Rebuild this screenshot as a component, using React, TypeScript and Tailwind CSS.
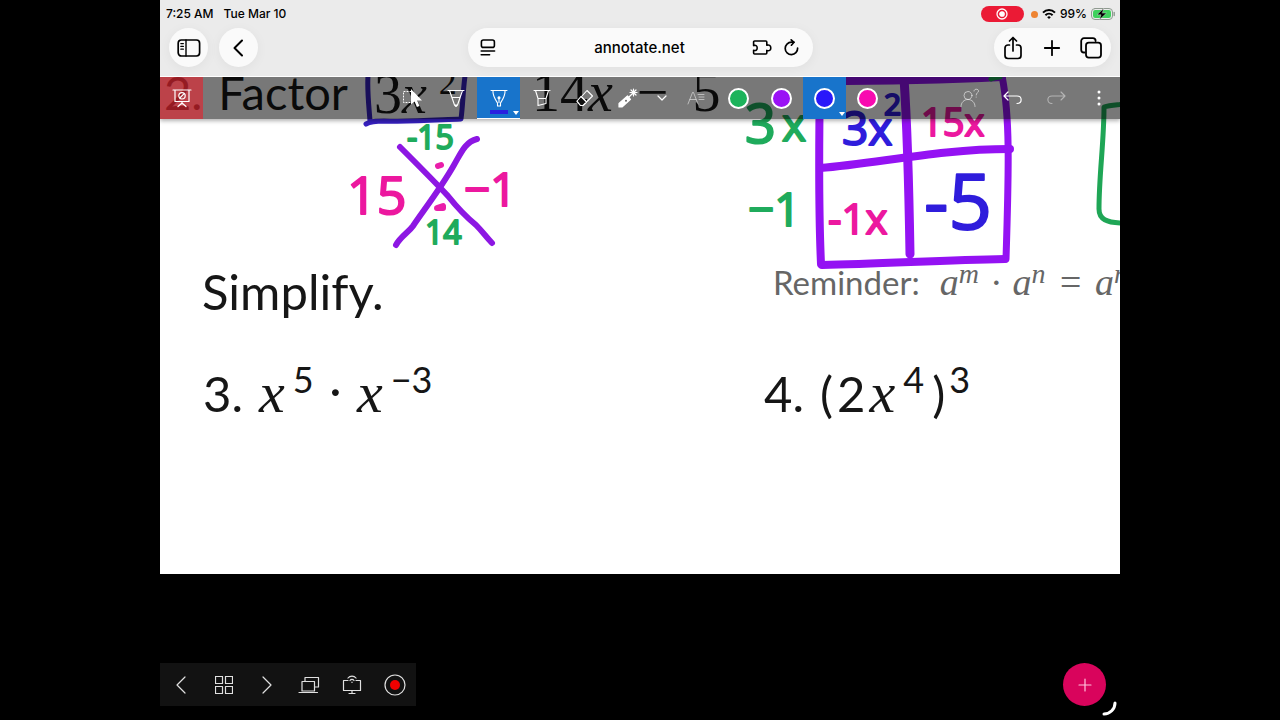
import type { ReactNode } from "react";

type IconProps = { w: number; h: number; children: ReactNode; className?: string; sw?: number };

function Icon({ w, h, children, className = "", sw = 1 }: IconProps) {
  return (
    <svg
      width={w}
      height={h}
      viewBox={`0 0 ${w} ${h}`}
      fill="none"
      stroke="currentColor"
      strokeWidth={sw}
      strokeLinecap="round"
      strokeLinejoin="round"
      aria-hidden="true"
      className={`shrink-0 ${className}`}
    >
      {children}
    </svg>
  );
}

function StatusBar() {
  return (
    <div className="flex h-7 items-center justify-between pr-1 pl-[6px] text-[12px] font-medium text-black">
      <div className="flex gap-[10px]">
        <span>7:25 AM</span>
        <span>Tue Mar 10</span>
      </div>
      <div className="flex items-center">
        <span className="mr-[7px] flex h-4 w-[43px] items-center justify-center rounded-full bg-[#eb1a35] text-white">
          <Icon w={12} h={12} sw={1.3}>
            <circle cx="6" cy="6" r="5" />
            <circle cx="6" cy="6" r="2.2" fill="currentColor" />
          </Icon>
        </span>
        <span className="mr-1 size-[7px] rounded-full bg-[#ee8433]" />
        <Icon w={14} h={12} sw={2} className="mr-1">
          <path d="M1 4.600a8.500 8.500 0 0 1 12 0M3.400 7.200a5.100 5.100 0 0 1 7.200 0" strokeLinecap="butt" />
          <path d="M7 11 5.200 9.200a2.500 2.500 0 0 1 3.600 0z" fill="currentColor" stroke="none" />
        </Icon>
        <span className="mr-1">99%</span>
        <Icon w={25} h={12}>
          <rect x="0.5" y="0.5" width="21" height="11" rx="3.5" stroke="#8f9a90" />
          <rect x="2" y="2" width="18" height="8" rx="2.2" fill="#3fd15d" stroke="none" />
          <path d="M23.200 4.500v3" stroke="#8f9a90" strokeWidth="1.4" />
          <path d="M12.500 0.600 6 6.800h4L8.600 11.500 15.500 5.100h-4z" fill="#000" stroke="#ebebeb" strokeWidth="0.4" />
        </Icon>
      </div>
    </div>
  );
}

function BrowserBar() {
  return (
    <nav aria-label="Browser" className="grid grid-cols-[1fr_345px_1fr] items-center px-[9px] text-black">
      <div className="flex gap-[11px]">
        <button aria-label="Sidebar" className="flex size-[39px] items-center justify-center rounded-full bg-[#fafafa] shadow-[0_2px_12px_rgba(0,0,0,0.05)]">
          <Icon w={24} h={18} sw={1.7}>
            <rect x="1.2" y="1" width="21.4" height="16" rx="3.2" />
            <path d="M9 1v16" strokeWidth="1.4" />
            <path d="M3.8 4.6h2.6M3.8 7.4h2.6M3.8 10.2h2.6" strokeWidth="1.2" />
          </Icon>
        </button>
        <button aria-label="Back" className="flex size-[39px] items-center justify-center rounded-full bg-[#fafafa] shadow-[0_2px_12px_rgba(0,0,0,0.05)]">
          <Icon w={16} h={18} sw={2}>
            <path d="M11 1.5 3.5 9l7.5 7.5" />
          </Icon>
        </button>
      </div>
      <div className="flex h-[39px] items-center rounded-full bg-[#fafafa] pr-[14px] pl-3 shadow-[0_2px_12px_rgba(0,0,0,0.05)]">
        <button aria-label="Page menu">
          <Icon w={16} h={17} sw={1.6}>
            <rect x="1.4" y="1" width="13" height="7.4" rx="2" />
            <path d="M1.2 12h13.4M1.2 15.8h8.4" />
          </Icon>
        </button>
        <button className="flex-1 pl-8 text-center text-[15px] leading-6 font-medium">annotate.net</button>
        <div className="flex items-center gap-3">
          <button aria-label="Extensions">
            <Icon w={20} h={16} sw={1.6}>
              <path d="M2.6 1h11.2a1 1 0 0 1 1 1v3.3c2.2-1 4 .2 4 2.6s-1.800 3.500-4 2.500V13a1 1 0 0 1-1 1H2.600a1 1 0 0 1-1-1v-2.800c2 .8 3.600 0 3.600-2.300S3.600 4.900 1.600 5.600V2a1 1 0 0 1 1-1z" />
            </Icon>
          </button>
          <button aria-label="Reload">
            <Icon w={15} h={17} sw={1.7}>
              <path d="M13.600 9.200a6.200 6.200 0 1 1-6.200-6.000h2.400" />
              <path d="M7.200 0.900 10 3.300 7.400 6.200" />
            </Icon>
          </button>
        </div>
      </div>
      <div className="flex h-[39px] w-[117px] items-center justify-between justify-self-end rounded-full bg-[#fafafa] px-[9px] shadow-[0_2px_12px_rgba(0,0,0,0.05)]">
        <button aria-label="Share">
          <Icon w={20} h={24} sw={1.7}>
            <path d="M6.500 9H5a3 3 0 0 0-3 3v7.500a3 3 0 0 0 3 3h10a3 3 0 0 0 3-3V12a3 3 0 0 0-3-3h-1.500" />
            <path d="M10 15V1.500M6.500 5 10 1.500 13.500 5" />
          </Icon>
        </button>
        <button aria-label="New tab">
          <Icon w={18} h={18} sw={1.800}>
            <path d="M9 1.800v14.400M1.800 9h14.400" />
          </Icon>
        </button>
        <button aria-label="Tabs">
          <Icon w={22} h={22} sw={1.800}>
            <path d="M4.500 15.500H4A2.800 2.800 0 0 1 1.200 12.700V4A2.800 2.800 0 0 1 4 1.200h8.800A2.800 2.800 0 0 1 15.600 4" />
            <rect x="6" y="5.600" width="15" height="15" rx="2.800" />
          </Icon>
        </button>
      </div>
    </nav>
  );
}

const slot = "relative flex h-[42px] w-[43px] shrink-0 items-center justify-center";

function Swatch({ name, color, active = false }: { name: string; color: string; active?: boolean }) {
  return (
    <button aria-label={name} className={`${slot} ${active ? "bg-[#1874cb]" : ""}`}>
      <span className={`size-[21px] rounded-full border-2 border-white ${color}`} />
      {active && <Corner />}
    </button>
  );
}

function Corner() {
  return (
    <svg width="6" height="4" viewBox="0 0 6 4" className="absolute right-[1px] bottom-[3px]" aria-hidden="true">
      <path d="M0 0h6L3 4z" fill="#fff" />
    </svg>
  );
}

function Toolbar() {
  return (
    <div
      role="toolbar"
      aria-label="Annotation tools"
      className="absolute inset-x-0 top-0 z-10 grid grid-cols-[1fr_auto_1fr] bg-black/53 text-white shadow-[0_2px_4px_rgba(0,0,0,0.3)]"
    >
      <div>
        <button aria-label="Stop presenting" className={`${slot} bg-[#e0252f]/65`}>
          <Icon w={20} h={20} sw={1.200}>
            <path d="M1 2h18M3 2v11.500h14V2M10 13.500v2.500M6 18.500 10 15l4 3.500" />
            <circle cx="10" cy="7.800" r="3.200" />
            <path d="m7.800 10 4.400-4.400" />
          </Icon>
        </button>
      </div>
      <div className="flex">
        <button aria-label="Select" className={slot}>
          <Icon w={22} h={20}>
            <path d="M9 3.500H1.500v11H8" strokeDasharray="1 2" />
            <path d="M9 1v15.500l3.600-3 2.300 5.500 2.600-1.100-2.300-5.400H20z" fill="currentColor" stroke="none" />
          </Icon>
        </button>
        <button aria-label="Pencil" className={slot}>
          <Icon w={18} h={20} sw={1.100}>
            <path d="M1 2.500h16M2.500 2.500 7.500 17h3l5-14.500M5 9.500h8M7.500 17l1.500 1.500 1.500-1.500" />
          </Icon>
        </button>
        <button aria-label="Pen" className={`${slot} border-b border-white bg-[#1874cb]`}>
          <Icon w={18} h={20} sw={1.100}>
            <path d="M1 2.500h16M3 2.500c-.500 5 2 8.500 4.500 12.500v3h3v-3C13 11 15.500 7.500 15 2.500M9 10v4.500" />
            <circle cx="9" cy="9.800" r="1" fill="currentColor" />
          </Icon>
          <span className="absolute bottom-[4px] h-1 w-[18px] bg-[#2a20e0]" />
          <Corner />
        </button>
        <button aria-label="Highlighter" className={slot}>
          <Icon w={18} h={20} sw={1.100}>
            <path d="M1 2.500h16M2.500 2.500 5 10.500h8l2.500-8M5 10.500v7l8-2v-5" />
          </Icon>
        </button>
        <button aria-label="Eraser" className={slot}>
          <Icon w={18} h={18} sw={1.100}>
            <path d="M11 1.500 16.500 7 7 16.500H4.500L1 12.500zM5 7.500 10.500 13" />
            <path d="m1 12 4-4.500 5.500 5.500L7 16.500H4.500z" fill="#111" />
          </Icon>
        </button>
        <button aria-label="Laser pointer" className={slot}>
          <Icon w={20} h={20} sw={1.200}>
            <path d="M1 15.500 9.500 8l3 3.300L4 19H1z" fill="currentColor" />
            <path d="m11 9 4-4M15.500 1v7M12 4.500h7M13 2l5 5M18 2l-5 5" />
            <circle cx="8" cy="12.800" r="1" fill="#666" stroke="none" />
          </Icon>
        </button>
        <button aria-label="More tools" className="flex h-[42px] w-[25px] items-center justify-center">
          <Icon w={10} h={6} sw={1.200}>
            <path d="m1 1 4 4 4-4" />
          </Icon>
        </button>
        <button aria-label="Text" className={`${slot} text-white/50`}>
          <Icon w={18} h={14}>
            <path d="M1 13 5.500 1.500h1L11 13M3 8.500h6M11 3.500h6M12 6h5M12 8.500h5" />
          </Icon>
        </button>
        <Swatch name="Green" color="bg-[#1cb35b]" />
        <Swatch name="Purple" color="bg-[#9a12f5]" />
        <Swatch name="Blue" color="bg-[#2a18fa]" active />
        <Swatch name="Pink" color="bg-[#f80ab0]" />
      </div>
      <div className="flex justify-end">
        <button aria-label="Participants" className={`${slot} text-white/55`}>
          <Icon w={20} h={20}>
            <circle cx="8" cy="7.500" r="4" />
            <path d="M1 18.500c0-4 3-7 7-7s7 3 7 7M14 3c0-2.500 4.500-2.500 4.500 0 0 2-2.300 1.500-2.300 4M16.200 9v.200" />
          </Icon>
        </button>
        <button aria-label="Undo" className={slot}>
          <Icon w={20} h={14} sw={1.200}>
            <path d="M5 1 1 5l4 4M1 5h13c5.500 0 5.500 7.500 0 7.500" />
          </Icon>
        </button>
        <button aria-label="Redo" className={`${slot} text-white/45`}>
          <Icon w={20} h={14} sw={1.100}>
            <path d="m15 1 4 4-4 4M19 5H6C0.500 5 0.500 12.500 6 12.500" />
          </Icon>
        </button>
        <button aria-label="More options" className={slot}>
          <Icon w={4} h={18}>
            <g fill="currentColor" stroke="none">
              <circle cx="2" cy="3" r="1.500" />
              <circle cx="2" cy="9" r="1.500" />
              <circle cx="2" cy="15" r="1.500" />
            </g>
          </Icon>
        </button>
      </div>
    </div>
  );
}

const sans = "font-['Lato','Carlito',sans-serif]";
const serif = "font-['Liberation_Serif',serif]";
const power = "top-0 align-[19px] text-[36px] leading-none";
const smallPower = "top-0 align-[12px] text-[28px] leading-none";

function Worksheet() {
  return (
    <div className="leading-none whitespace-nowrap text-[#161616]">
      <p className={`absolute -top-2 left-1 flex items-baseline ${sans} text-[47px]`}>
        <span>2.</span>
        <span className="ml-4">Factor</span>
      </p>
      <p className={`absolute top-[-13px] left-[214px] ${serif} text-[56px]`}>
        3<i>x</i>
        <sup className={`ml-3 ${power}`}>2</sup>
      </p>
      <p className={`absolute top-[-13px] left-[372px] ${serif} text-[56px]`}>
        14<i>x</i>
        <span className="mx-6">−</span>5
      </p>
      <h2 className={`absolute top-[190px] left-[42px] ${sans} text-[49px]`}>Simplify.</h2>
      <p className={`absolute top-[284px] left-[43px] ${sans} text-[49px]`}>
        3.
        <span className={`ml-4 ${serif} text-[58px] leading-none`}>
          <i>x</i>
          <sup className={`ml-2 ${sans} ${power}`}>5</sup>
          <span className="mx-3">·</span>
          <i>x</i>
          <sup className={`ml-2 ${sans} ${power}`}>−3</sup>
        </span>
      </p>
      <p className={`absolute top-[284px] left-[604px] ${sans} text-[49px]`}>
        4.
        <span className="ml-4">
          (<span className="ml-1">2</span>
          <i className={`ml-1 ${serif} text-[58px] leading-none`}>x</i>
          <sup className={`ml-2 ${power}`}>4</sup>
          <span className="ml-2">)</span>
          <sup className={`ml-1 ${power}`}>3</sup>
        </span>
      </p>
      <p className={`absolute top-[183px] left-[613px] ${sans} text-[33px] text-[#666]`}>
        Reminder:
        <span className={`ml-5 ${serif} text-[38px] leading-none italic`}>
          a<sup className={smallPower}>m</sup>
          <span className="mx-3">·</span>a<sup className={smallPower}>n</sup>
          <span className="mx-3">=</span>a<sup className={smallPower}>n</sup>
        </span>
      </p>
    </div>
  );
}

function Ink() {
  return (
    <svg width="960" height="497" viewBox="160 77 960 497" className="absolute top-0 left-0 max-w-none" role="img" aria-label="Handwritten work">
      <g fill="none" strokeLinecap="round" strokeLinejoin="round">
        <path d="M368 76c-1 15 1 31 2 45M366 124c5-3 10-3 18-3 28 1 52-1 77-2 2-15 2-29 4-43" stroke="#3620c0" strokeWidth="5" />
        <g stroke="#8d17e3" strokeWidth="6">
          <path d="M400 147c18 18 34 34 48 49 8 10 17 20 28 29 7 7 10 12 16 18" />
          <path d="M477 139c-12 3-16 14-23 26-13 23-31 46-41 61-5 7-12 10-17 19" />
        </g>
        <g stroke="#9412f3">
          <path d="M820 78c-1 60-2 120 1 186" strokeWidth="8" />
          <path d="M821 81c60 0 120-1 181-4" strokeWidth="8" />
          <path d="M904 78c4 60 5 115 6 176" strokeWidth="9" />
          <path d="M1002 76c8 40 7 90 4 183" strokeWidth="7" />
          <path d="M820 168c60-5 120-19 190-19" strokeWidth="8" />
          <path d="M822 265c60-1 120-5 183-6" strokeWidth="8" />
        </g>
        <path d="M991 79c4-2 7-2 9-2M1124 104c-8 1-14 1-20 3 0 35-5 68-5 102 0 10 7 14 25 14" stroke="#1fa656" strokeWidth="5" />
        <path d="M438 166l3-1M437 208l6-2v2z" stroke="#ea1eaa" strokeWidth="6" />
      </g>
      <g strokeWidth="2" strokeLinejoin="round" className="font-['Open_Sans',sans-serif]">
        <g fill="#1fab5c" stroke="#1fab5c">
          <text x="407" y="149" fontSize="32">-15</text>
          <text x="425" y="244" fontSize="32">14</text>
          <text x="745" y="143" fontSize="54">3</text>
          <text x="782" y="141" fontSize="46">x</text>
          <text x="748" y="226" fontSize="46">−1</text>
        </g>
        <g fill="#ec189f" stroke="#ec189f">
          <text x="347" y="214" fontSize="52">15</text>
          <text x="464" y="206" fontSize="46">−1</text>
          <text x="921" y="136" fontSize="38">15x</text>
          <text x="828" y="234" fontSize="42">-1x</text>
        </g>
        <g fill="#2f1ddc" stroke="#2f1ddc">
          <text x="842" y="145" fontSize="46">3x</text>
          <text x="884" y="115" fontSize="30">2</text>
          <text x="924" y="229" fontSize="76">-5</text>
        </g>
      </g>
    </svg>
  );
}

const pageSlot = "flex flex-1 items-center justify-center";

function PageControls() {
  return (
    <div role="toolbar" aria-label="Pages" className="flex h-[43px] w-64 bg-[#121212] text-[#e0e0e0]">
      <button aria-label="Previous page" className={pageSlot}>
        <Icon w={10} h={18} sw={1.200}>
          <path d="M9 1 1 9l8 8" />
        </Icon>
      </button>
      <button aria-label="All pages" className={pageSlot}>
        <Icon w={18} h={18} sw={1.200}>
          <path d="M0.500 0.500h7v7h-7zM10.500 0.500h7v7h-7zM0.500 10.500h7v7h-7zM10.500 10.500h7v7h-7z" />
        </Icon>
      </button>
      <button aria-label="Next page" className={pageSlot}>
        <Icon w={10} h={18} sw={1.200}>
          <path d="m1 1 8 8-8 8" />
        </Icon>
      </button>
      <button aria-label="Devices" className={pageSlot}>
        <Icon w={22} h={18} sw={1.200}>
          <path d="M4 5.500h12.500V15H4zM1 16.500h18.500M7 5.500V1.500h13.500V11h-3.500" />
        </Icon>
      </button>
      <button aria-label="Cast screen" className={pageSlot}>
        <Icon w={20} h={20} sw={1.200}>
          <path d="M6 5.500H1.500v10h17v-10H14M10 15.500v3M7 18.500h6M6 3c2-2.500 6-2.500 8 0M8 5.500c1-1.500 3-1.500 4 0M10 7v.500" />
        </Icon>
      </button>
      <button aria-label="Record" className={pageSlot}>
        <Icon w={22} h={22} sw={1.200}>
          <circle cx="11" cy="11" r="10" />
          <circle cx="11" cy="11" r="5" fill="#f00000" stroke="none" />
        </Icon>
      </button>
    </div>
  );
}

export default function App() {
  return (
    <div className="min-h-screen bg-black font-['Inter',sans-serif]">
      <div className="mx-auto flex min-h-screen w-3/4 flex-col">
        <header className="border-b border-white bg-[#ebebeb] pb-[9px]">
          <StatusBar />
          <BrowserBar />
        </header>
        <main className="relative h-[497px] overflow-hidden bg-white">
          <Worksheet />
          <Ink />
          <Toolbar />
        </main>
        <footer className="flex flex-1 items-end justify-between pr-[14px] pb-[14px]">
          <PageControls />
          <div className="relative">
            <button aria-label="Add" className="flex size-[43px] items-center justify-center rounded-full bg-[#d9045c] text-[#ffc4dc]">
              <Icon w={14} h={14} sw={1.200}>
                <path d="M7 1v12M1 7h12" />
              </Icon>
            </button>
            <Icon w={16} h={16} sw={3} className="absolute -right-[11px] -bottom-[11px] text-white">
              <path d="M14 2c0 6-5 11-11 11" />
            </Icon>
          </div>
        </footer>
      </div>
    </div>
  );
}
